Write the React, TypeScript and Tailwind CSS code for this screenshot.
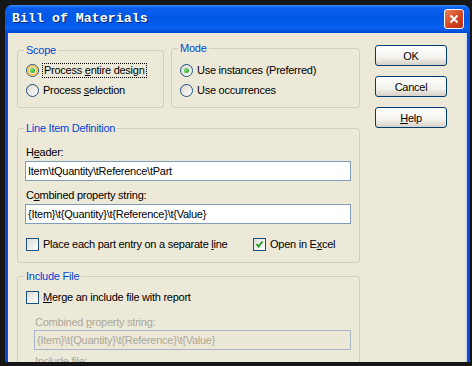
import React from 'react';

function U({ children }: { children: React.ReactNode }) {
  return <span className="underline decoration-1 underline-offset-[1px]">{children}</span>;
}

function Radio({ checked, hot }: { checked?: boolean; hot?: boolean }) {
  return (
    <span className="relative flex h-[13px] w-[13px] shrink-0 items-center justify-center rounded-full border border-[#1C5180] bg-[linear-gradient(135deg,#DCD9CF,#FFFFFF)]">
      {hot && <span className="absolute inset-0 rounded-full border-2 border-[#F6C55A]" />}
      {checked && (
        <span className="relative h-[5px] w-[5px] rounded-full bg-[radial-gradient(circle_at_35%_35%,#7BE477,#1E9A1E)]" />
      )}
    </span>
  );
}

function Check({ checked }: { checked?: boolean }) {
  return (
    <span className="flex h-[13px] w-[13px] shrink-0 items-center justify-center border border-[#1C5180] bg-[linear-gradient(135deg,#DCDCD7,#FFFFFF)]">
      {checked && (
        <svg width="9" height="9" viewBox="0 0 9 9">
          <path d="M1.5 4 L3.5 6.5 L7.5 1.5" stroke="#21A121" strokeWidth="2" fill="none" />
        </svg>
      )}
    </span>
  );
}

function Button({ children }: { children: React.ReactNode }) {
  return (
    <div className="flex h-[21px] w-[72px] items-center justify-center rounded-[3px] border border-[#003C74] bg-[linear-gradient(to_bottom,#FFFFFF_0%,#F4F3EE_60%,#D6D0C5_100%)] text-black">
      {children}
    </div>
  );
}

export default function App() {
  return (
    <div className="h-[366px] w-[472px] overflow-hidden bg-[#161616] pl-[5px] pt-[5px] font-['Liberation_Sans',Arial,sans-serif] text-[11px] leading-[14px] tracking-[-0.25px] text-black">
      <div className="flex h-[357px] w-[465px] flex-col overflow-hidden rounded-t-[7px] bg-[#0A48DC]">
        {/* title bar */}
        <div className="flex h-[28px] shrink-0 items-center justify-between bg-[linear-gradient(to_bottom,#3C8CF6_0%,#0A5EEB_10%,#0058E6_50%,#0A5FEE_85%,#0047CF_100%)] pl-[7px] pr-[6px]">
          <span className="font-['Liberation_Mono',monospace] text-[13.3px] font-bold tracking-normal text-white [text-shadow:1px_1px_0_#0A1F70]">
            Bill of Materials
          </span>
          <div className="flex h-[20px] w-[20px] items-center justify-center rounded-[3px] border border-white bg-[linear-gradient(135deg,#E9825F,#D2411C_60%,#B8300F)]">
            <svg width="10" height="10" viewBox="0 0 10 10">
              <path d="M1.5 1.5 L8.5 8.5 M8.5 1.5 L1.5 8.5" stroke="white" strokeWidth="2" />
            </svg>
          </div>
        </div>

        {/* client */}
        <div className="ml-[3px] mr-[3px] flex flex-1 border-r-2 border-[#CFDDF7] bg-[#ECE9D8] pl-[9px] pt-[11px]">
          <div className="flex w-[343px] flex-col">
            <div className="flex items-start gap-[7px]">
              <fieldset className="h-[64px] w-[147px] rounded-[3px] border border-[#D0D0BF] pl-[8px]">
                <legend className="-ml-[2px] px-[2px] leading-[13px] text-[#0046D5]">Scope</legend>
                <div className="mt-[3px] flex h-[20px] items-center gap-[3px]">
                  <Radio checked hot />
                  <span className="border border-dotted border-black px-[1px] leading-[13px]">
                    Process <U>e</U>ntire design
                  </span>
                </div>
                <div className="flex h-[20px] items-center gap-[4px]">
                  <Radio />
                  <span>
                    Process <U>s</U>election
                  </span>
                </div>
              </fieldset>
              <fieldset className="-mt-[2px] h-[66px] w-[189px] rounded-[3px] border border-[#D0D0BF] pl-[8px]">
                <legend className="-ml-[2px] px-[2px] leading-[13px] text-[#0046D5]">Mode</legend>
                <div className="mt-[5px] flex h-[20px] items-center gap-[4px]">
                  <Radio checked />
                  <span>Use instances (Preferred)</span>
                </div>
                <div className="flex h-[20px] items-center gap-[4px]">
                  <Radio />
                  <span>Use occurrences</span>
                </div>
              </fieldset>
            </div>

            <fieldset className="mt-[14px] h-[141px] rounded-[3px] border border-[#D0D0BF] pl-[7px] pr-[8px]">
              <legend className="-ml-[1px] px-[2px] leading-[13px] text-[#0046D5]">Line Item Definition</legend>
              <div className="ml-[1px] mt-[10px]">
                H<U>e</U>ader:
              </div>
              <div className="mt-[2px] flex h-[20px] items-center border border-[#7F9DB9] bg-white pl-[2px]">
                Item\tQuantity\tReference\tPart
              </div>
              <div className="ml-[1px] mt-[7px]">
                C<U>o</U>mbined property string:
              </div>
              <div className="mt-[2px] flex h-[20px] items-center border border-[#7F9DB9] bg-white pl-[2px]">
                {'{Item}\\t{Quantity}\\t{Reference}\\t{Value}'}
              </div>
              <div className="ml-[1px] mt-[12px] flex h-[16px] items-center">
                <div className="flex w-[227px] items-center gap-[4px]">
                  <Check />
                  <span>
                    Place each part entry on a separate <U>l</U>ine
                  </span>
                </div>
                <div className="flex items-center gap-[4px]">
                  <Check checked />
                  <span>
                    Open in E<U>x</U>cel
                  </span>
                </div>
              </div>
            </fieldset>

            <fieldset className="mt-[7px] h-[120px] rounded-[3px] border border-[#D0D0BF] pl-[7px] pr-[8px]">
              <legend className="-ml-[1px] px-[2px] leading-[13px] text-[#0046D5]">Include File</legend>
              <div className="ml-[1px] mt-[6px] flex h-[16px] items-center gap-[4px]">
                <Check />
                <span>
                  <U>M</U>erge an include file with report
                </span>
              </div>
              <div className="ml-[9px] text-[#ACA899]">
                <div className="ml-[1px] mt-[10px]">
                  Combined <U>p</U>roperty string:
                </div>
                <div className="mt-[1px] flex h-[20px] items-center border border-[#A9B8C8] bg-[#EBE8D7] pl-[2px]">
                  {'{Item}\\t{Quantity}\\t{Reference}\\t{Value}'}
                </div>
                <div className="ml-[1px] mt-[4px]">
                  Include <U>f</U>ile:
                </div>
              </div>
            </fieldset>
          </div>

          <div className="ml-[15px] mt-[1px] flex flex-col gap-[10px]">
            <Button>OK</Button>
            <Button>Cancel</Button>
            <Button>
              <U>H</U>elp
            </Button>
          </div>
        </div>
      </div>
    </div>
  );
}
